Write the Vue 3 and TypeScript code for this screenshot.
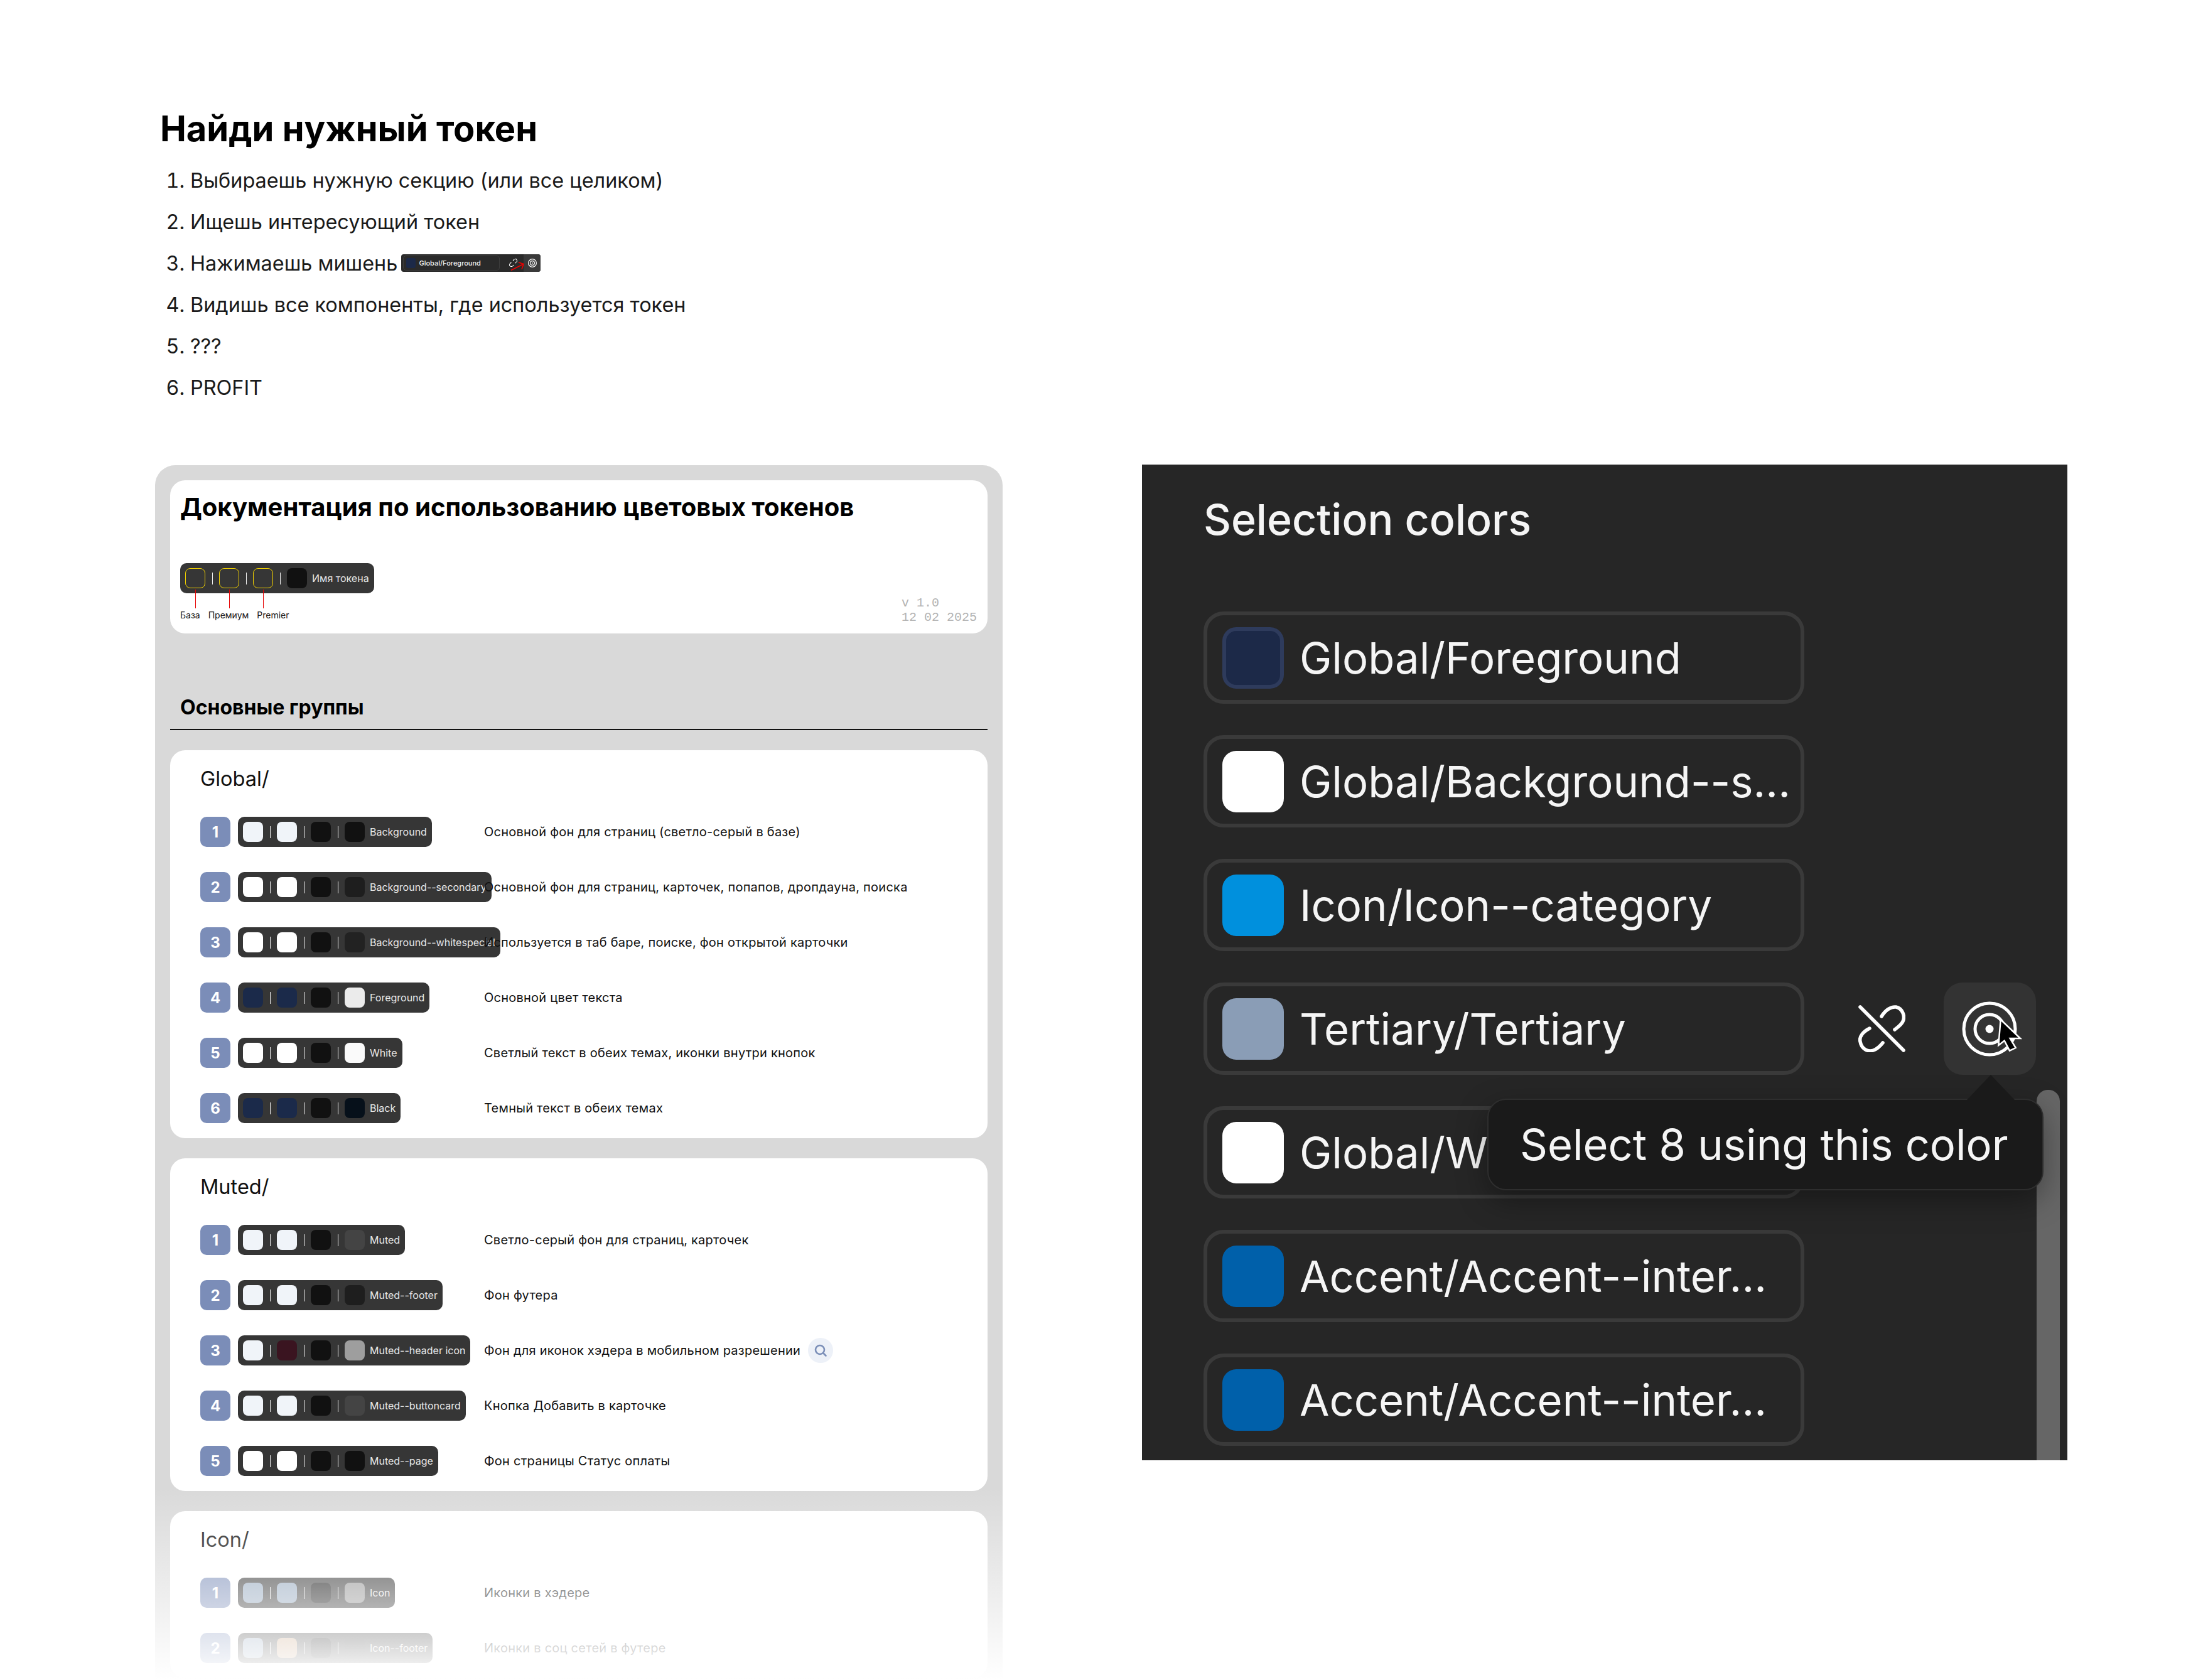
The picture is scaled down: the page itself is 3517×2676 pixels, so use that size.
<script setup lang="ts">
interface Row { c: string[]; name: string; desc: string; search?: boolean }
interface Group { title: string; rows: Row[] }
const W = '#ffffff', L = '#f0f4f9', D = '#111111', N = '#1b2a4a'
const groups: Group[] = [
  { title: 'Global/', rows: [
    { c: [L, L, D, D], name: 'Background', desc: 'Основной фон для страниц (светло-серый в базе)' },
    { c: [W, W, D, '#1e1e1e'], name: 'Background--secondary', desc: 'Основной фон для страниц, карточек, попапов, дропдауна, поиска' },
    { c: [W, W, D, '#222222'], name: 'Background--whitespecial', desc: 'Используется в таб баре, поиске, фон открытой карточки' },
    { c: [N, N, D, '#ebebeb'], name: 'Foreground', desc: 'Основной цвет текста' },
    { c: [W, W, D, '#fafafa'], name: 'White', desc: 'Светлый текст в обеих темах, иконки внутри кнопок' },
    { c: [N, N, D, '#06101a'], name: 'Black', desc: 'Темный текст в обеих темах' },
  ] },
  { title: 'Muted/', rows: [
    { c: [L, L, D, '#444444'], name: 'Muted', desc: 'Светло-серый фон для страниц, карточек' },
    { c: [L, L, D, '#1e1e1e'], name: 'Muted--footer', desc: 'Фон футера' },
    { c: [L, '#3a1420', D, '#9e9e9e'], name: 'Muted--header icon', desc: 'Фон для иконок хэдера в мобильном разрешении', search: true },
    { c: [L, L, D, '#444444'], name: 'Muted--buttoncard', desc: 'Кнопка Добавить в карточке' },
    { c: [W, W, D, D], name: 'Muted--page', desc: 'Фон страницы Статус оплаты' },
  ] },
  { title: 'Icon/', rows: [
    { c: ['#90a4bb', '#90a4bb', D, '#909090'], name: 'Icon', desc: 'Иконки в хэдере' },
    { c: ['#90a4bb', '#c39b78', D, '#333333'], name: 'Icon--footer', desc: 'Иконки в соц сетей в футере' },
  ] },
]
const selection = [
  { color: '#1c2948', label: 'Global/Foreground', ring: true },
  { color: '#ffffff', label: 'Global/Background--s...' },
  { color: '#0090dd', label: 'Icon/Icon--category' },
  { color: '#8a9db6', label: 'Tertiary/Tertiary', active: true },
  { color: '#ffffff', label: 'Global/White' },
  { color: '#0060aa', label: 'Accent/Accent--inter...' },
  { color: '#0060aa', label: 'Accent/Accent--inter...' },
]
const steps = ['Выбираешь нужную секцию (или все целиком)', 'Ищешь интересующий токен', 'Нажимаешь мишень', 'Видишь все компоненты, где используется токен', '???', 'PROFIT']
</script>

<template>
  <div class="page">
    <header class="intro">
      <h1>Найди нужный токен</h1>
      <ol>
        <li v-for="(s, i) in steps" :key="i">
          {{ s }}
          <span v-if="i === 2" class="mini">
            <span class="mini-field"><i class="mini-sw"></i><span class="mini-text">Global/Foreground</span></span>
            <svg class="mini-link" viewBox="0 0 75 75" fill="none" stroke="#fff" stroke-width="7" stroke-linecap="round" stroke-dasharray="14 9">
              <path d="M37 18C43 8 52 2 60 3C70 5 75 17 71 26C68 32 63 35 58 39" />
              <path d="M18 37C8 42 1 50 3 58C5 70 15 75 24 72C30 70 35 65 39 60" />
            </svg>
            <span class="mini-btn">
              <svg viewBox="0 0 24 24" fill="none" stroke="#fff" stroke-width="1.6"><circle cx="12" cy="12" r="8.5" /><circle cx="12" cy="12" r="4.5" /><circle cx="12" cy="12" r="1.2" fill="#fff" stroke="none" /></svg>
            </span>
            <svg class="mini-arrow" viewBox="0 0 28 16" fill="none" stroke="#ee0000" stroke-width="1.6"><path d="M1 14.5L20 5" /><path d="M13 2L21 4.5L18 13" /></svg>
          </span>
        </li>
      </ol>
    </header>

    <section class="docs">
      <div class="doc-head">
        <div>
          <h2>Документация по использованию цветовых токенов</h2>
          <div class="chip legend">
            <template v-for="n in 3" :key="n">
              <i class="sw outlined"></i><i class="sep"></i>
            </template>
            <i class="sw" style="background: #111111"></i>
            <span class="chip-name">Имя токена</span>
          </div>
          <div class="legend-labels"><span>База</span><span>Премиум</span><span>Premier</span></div>
        </div>
        <div class="version">v 1.0<br />12 02 2025</div>
      </div>

      <h3>Основные группы</h3>

      <div class="groups">
        <article v-for="g in groups" :key="g.title" class="group">
          <h4>{{ g.title }}</h4>
          <div class="rows">
            <div v-for="(r, i) in g.rows" :key="r.name" class="row">
              <span class="badge">{{ i + 1 }}</span>
              <div class="chip-col">
                <div class="chip">
                  <template v-for="(col, k) in r.c" :key="k">
                    <i class="sw" :style="{ background: col }"></i>
                    <i v-if="k < 3" class="sep"></i>
                  </template>
                  <span class="chip-name">{{ r.name }}</span>
                </div>
              </div>
              <p class="desc">{{ r.desc }}</p>
              <span v-if="r.search" class="search">
                <svg viewBox="0 0 24 24" fill="none" stroke="#7b8fb8" stroke-width="2.6" stroke-linecap="round"><circle cx="11" cy="11" r="7" /><path d="M16.5 16.5L20.5 20.5" /></svg>
              </span>
            </div>
          </div>
        </article>
      </div>
      <div class="fade"></div>
    </section>

    <section class="selection">
      <h2 class="sel-title">Selection colors</h2>
      <div class="sel-list">
        <div v-for="(s, i) in selection" :key="i" class="sel-line">
          <div class="sel-row">
            <i class="sel-sw" :class="{ ring: s.ring }" :style="{ background: s.color }"></i>
            <span class="sel-label">{{ s.label }}</span>
          </div>
          <template v-if="s.active">
            <svg class="unlink" viewBox="0 0 75 75" fill="none" stroke="#fff" stroke-width="5.5" stroke-linecap="round">
              <path d="M3 3L72 72" />
              <path d="M37 18C43 8 52 2 60 3C70 5 75 17 71 26C68 32 63 35 58 39" />
              <path d="M18 37C8 42 1 50 3 58C5 70 15 75 24 72C30 70 35 65 39 60" />
            </svg>
            <span class="target">
              <svg viewBox="0 0 147 147" fill="none" stroke="#fff" stroke-width="5">
                <circle cx="73" cy="74" r="41" />
                <circle cx="73" cy="74" r="23" />
                <circle cx="73" cy="74" r="6.5" fill="#fff" stroke="none" />
                <path d="M90.7 59L122 89L105.7 89L114.7 104L105 108.7L96.7 92.7L87.3 100Z" fill="#000" stroke="#fff" stroke-width="2.5" />
              </svg>
            </span>
          </template>
        </div>
      </div>
      <div class="scrollbar"></div>
      <div class="tooltip">Select 8 using this color</div>
    </section>
  </div>
</template>

<style>
html, body { margin: 0; background: #ffffff; }
</style>

<style scoped>
.page {
  width: 3517px;
  height: 2676px;
  overflow: hidden;
  box-sizing: border-box;
  padding-left: 247px;
  display: grid;
  grid-template-columns: 1350px 1474px;
  grid-template-rows: 741px 1fr;
  column-gap: 222px;
  font-family: Inter, "Noto Sans", sans-serif;
  color: #000;
  background: #fff;
}
i { display: block; font-style: normal; flex: none; }
h1, h2, h3, h4, p, ol { margin: 0; }

.intro { grid-column: 1 / 3; padding: 171px 0 0 8px; }
h1 { font-size: 56px; line-height: 68px; font-weight: 700; }
ol { margin-top: 16px; padding-left: 48px; }
li { font-size: 32.4px; line-height: 66px; height: 66px; color: #1a1a1a; }

.mini {
  position: relative;
  display: inline-block;
  vertical-align: middle;
  width: 222px;
  height: 28px;
  margin: -7px 0 0 -3px;
  background: #2a2a2a;
  border-radius: 4px;
}
.mini-field {
  position: absolute;
  left: 3px; top: 2px;
  width: 152px; height: 22px;
  border: 1px solid #3c3c3c;
  border-radius: 5px;
  display: flex;
  align-items: center;
}
.mini-sw { width: 15px; height: 16px; margin-left: 4px; border-radius: 3px; background: #1c2948; }
.mini-text { margin-left: 5px; font-size: 11px; line-height: 16px; color: #f2f2f2; font-weight: 500; }
.mini-link { position: absolute; left: 172px; top: 7px; width: 13px; height: 13px; }
.mini-btn {
  position: absolute; right: 0; top: 0;
  width: 27px; height: 28px;
  background: #3a3a3a; border-radius: 0 4px 4px 0;
  display: flex; align-items: center; justify-content: center;
}
.mini-btn svg { width: 18px; height: 18px; }
.mini-arrow { position: absolute; left: 174px; top: 11px; width: 28px; height: 16px; }

.docs {
  position: relative;
  height: 1935px;
  overflow: hidden;
  box-sizing: border-box;
  padding: 24px 24px 0;
  background: #d9d9d9;
  border-radius: 32px 32px 0 0;
}
.doc-head {
  height: 244px;
  box-sizing: border-box;
  padding: 19px 16px 14px;
  background: #fff;
  border-radius: 24px;
  display: flex;
  justify-content: space-between;
}
.doc-head h2 { font-size: 40.05px; line-height: 47px; font-weight: 700; }
.version {
  align-self: flex-end;
  width: 120px;
  margin-right: 1px;
  font-family: "Liberation Mono", monospace;
  font-size: 20px;
  line-height: 23px;
  color: #b3b3b3;
  white-space: nowrap;
}
.chip {
  display: flex;
  align-items: center;
  width: max-content;
  height: 48px;
  box-sizing: border-box;
  padding: 0 8px;
  background: #363636;
  border-radius: 10px;
}
.legend { margin-top: 66px; }
.sw { width: 32px; height: 32px; border-radius: 8px; }
.outlined { position: relative; box-sizing: border-box; border: 1.5px solid #f2d100; }
.outlined::after {
  content: "";
  position: absolute;
  left: 50%;
  top: calc(100% + 3px);
  width: 1px;
  height: 30px;
  background: #e60000;
}
.sep { width: 1.5px; height: 19px; margin: 0 10px 0 10.5px; background: #f2f2f2; }
.chip-name { margin-left: 8px; font-size: 16px; line-height: 20px; color: #e8e8e8; white-space: nowrap; }
.legend-labels { display: flex; gap: 13px; margin-top: 25px; font-size: 14px; line-height: 20px; color: #1a1a1a; }

h3 {
  margin-top: 98px;
  padding: 0 16px 14px;
  font-size: 32px;
  line-height: 40px;
  font-weight: 700;
  border-bottom: 2px solid #111;
}
.groups { margin-top: 32px; display: flex; flex-direction: column; gap: 32px; }
.group { padding: 26px 48px 24px; background: #fff; border-radius: 24px; }
h4 { font-size: 32.5px; line-height: 40px; font-weight: 400; color: #111; }
.rows { margin-top: 40px; display: flex; flex-direction: column; gap: 40px; }
.row { display: flex; align-items: center; height: 48px; }
.badge {
  flex: none;
  width: 48px; height: 48px;
  margin-right: 12px;
  border-radius: 10px;
  background: #7b8db8;
  color: #fff;
  font-size: 24px;
  font-weight: 700;
  display: flex; align-items: center; justify-content: center;
}
.chip-col { flex: none; width: 392px; }
.desc { font-size: 20px; letter-spacing: 0.24px; line-height: 24px; color: #111; white-space: nowrap; }
.search {
  flex: none;
  width: 40px; height: 40px;
  margin-left: 12px;
  border-radius: 50%;
  background: #edf1f8;
  display: flex; align-items: center; justify-content: center;
}
.search svg { width: 24px; height: 24px; }
.fade {
  position: absolute;
  left: 0; right: 0; bottom: 0;
  height: 306px;
  background: linear-gradient(to bottom, rgba(255,255,255,0), #fff);
}

.selection {
  position: relative;
  margin-top: -1px;
  height: 1586px;
  overflow: hidden;
  box-sizing: border-box;
  padding: 47px 0 0 98px;
  background: #262626;
}
.sel-title { font-size: 68px; line-height: 80px; font-weight: 500; color: #f5f5f5; }
.sel-list { margin-top: 107px; display: flex; flex-direction: column; gap: 50px; }
.sel-line { display: flex; align-items: center; height: 147px; }
.sel-row {
  flex: none;
  width: 957px; height: 147px;
  box-sizing: border-box;
  border: 6px solid #3a3a3a;
  border-radius: 32px;
  padding-left: 24px;
  display: flex;
  align-items: center;
}
.sel-sw { width: 98px; height: 98px; border-radius: 22px; box-sizing: border-box; }
.ring { border: 6px solid #2e3b5c; }
.sel-label { margin-left: 25px; font-size: 68.8px; line-height: 90px; color: #f5f5f5; white-space: nowrap; }
.unlink { flex: none; width: 75px; height: 75px; margin-left: 86px; }
.target {
  flex: none;
  width: 147px; height: 147px;
  margin-left: 61px;
  background: #333333;
  border-radius: 30px;
}
.target svg { display: block; width: 147px; height: 147px; overflow: visible; }
.scrollbar {
  position: absolute;
  left: 1425px; top: 996px; bottom: 0;
  width: 37px;
  background: #666666;
  border-radius: 18px 18px 0 0;
}
.tooltip {
  position: absolute;
  left: 550px; top: 1010px;
  width: 886px; height: 146px;
  box-sizing: border-box;
  padding-left: 50px;
  display: flex;
  align-items: center;
  font-size: 68.6px;
  color: #f5f5f5;
  background: #1a1a1a;
  border: 2px solid #2e2e2e;
  border-radius: 30px;
  box-shadow: 0 16px 48px rgba(0, 0, 0, 0.35);
  white-space: nowrap;
}
.tooltip::before {
  content: "";
  position: absolute;
  left: 762px;
  top: -40px;
  width: 0; height: 0;
  border-left: 38px solid transparent;
  border-right: 38px solid transparent;
  border-bottom: 40px solid #1a1a1a;
}
</style>
